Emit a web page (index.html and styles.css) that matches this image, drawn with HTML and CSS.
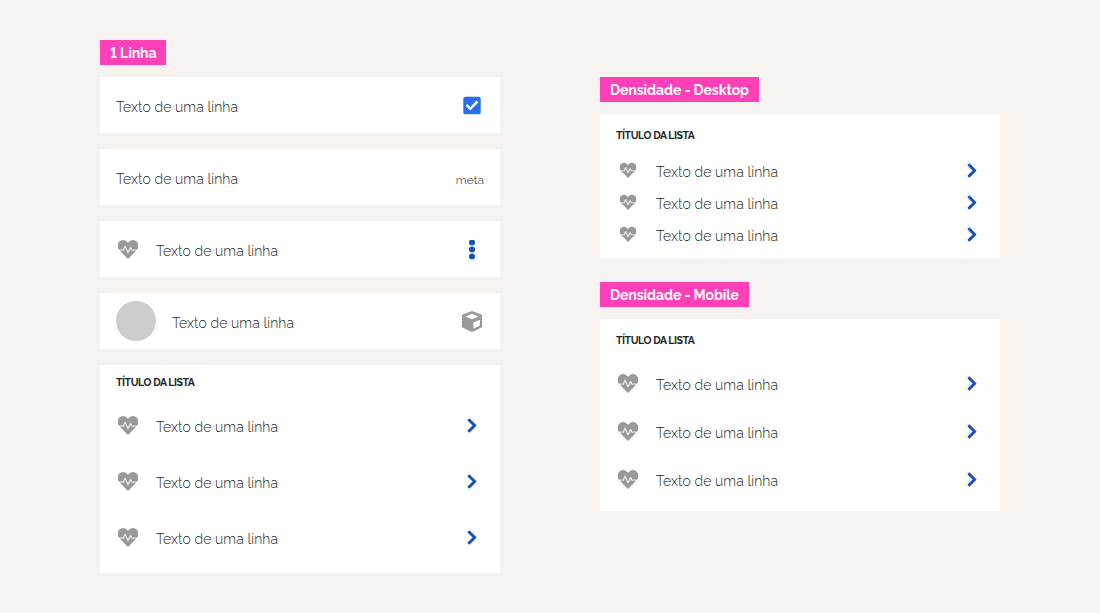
FILE: index.html
```html
<!DOCTYPE html>
<html lang="pt-BR">
<head>
<meta charset="utf-8">
<title>Lista</title>
<link rel="stylesheet" href="styles.css">
</head>
<body>
<svg class="symbols" aria-hidden="true">
  <symbol id="heart" viewBox="0 0 512 512"><path d="M320.2 243.8l-49.7 99.4c-6 12.1-23.4 11.7-28.9-.6l-56.9-126.3-30 71.7H60.6l182.5 186.5c7.1 7.3 18.6 7.3 25.7 0L451.4 288H342.3l-22.1-44.2zM473.7 73.9l-2.4-2.5c-51.5-52.6-135.8-52.6-187.4 0L256 100l-27.9-28.5c-51.5-52.7-135.9-52.7-187.4 0l-2.4 2.4C-10.4 123.7-12.5 203 31 256h102.4l35.9-86.2c5.4-12.9 23.6-13.2 29.4-.4l58.2 129.3 49-97.9c5.9-11.8 22.7-11.8 28.6 0l27.6 55.2H481c43.5-53 41.4-132.3-7.3-182.1z"/></symbol>
  <symbol id="chevron" viewBox="-96 0 512 512"><path d="M285.476 272.971L91.132 467.314c-9.373 9.373-24.569 9.373-33.941 0l-22.667-22.667c-9.357-9.357-9.375-24.522-.04-33.901L188.505 256 34.484 101.255c-9.335-9.379-9.317-24.544.04-33.901l22.667-22.667c9.373-9.373 24.569-9.373 33.941 0L285.475 239.03c9.373 9.372 9.373 24.568.001 33.941z"/></symbol>
  <symbol id="check" viewBox="0 0 20 20"><path fill-rule="evenodd" d="M3.2 1.2h13.6a1.9 1.9 0 0 1 1.9 1.9v13.8a1.9 1.9 0 0 1-1.9 1.9H3.2a1.9 1.9 0 0 1-1.9-1.9V3.1a1.9 1.9 0 0 1 1.9-1.9zM8.3 15 16.4 6.9 14.6 5.1 8.3 11.4 5.4 8.5 3.6 10.3z"/></symbol>
  <symbol id="dots" viewBox="0 0 20 20"><circle cx="10" cy="3" r="3"/><circle cx="10" cy="10" r="3"/><circle cx="10" cy="17" r="3"/></symbol>
  <symbol id="cube" viewBox="0 0 20 20"><path fill-rule="evenodd" d="M9.3.2 1 3.3Q0 3.7 0 4.8v9.6q0 1 .9 1.5l8.2 4q.9.4 1.8 0l8.2-4q.9-.5.9-1.5V4.8q0-1.1-1-1.5L10.7.2q-.7-.3-1.4 0zM10 2.7l6.3 2.5-6.3 2.7-6.3-2.7zM11.3 11l6.3-2.7v5.6l-6.3 3.1z"/></symbol>
</svg>
<main class="board">
  <section class="column">
    <h2 class="tag">1 Linha</h2>
    <div class="cards">
      <div class="card item"><span class="text">Texto de uma linha</span><svg class="icon check"><use href="#check"/></svg></div>
      <div class="card item"><span class="text">Texto de uma linha</span><span class="meta">meta</span></div>
      <div class="card item"><svg class="icon heart"><use href="#heart"/></svg><span class="text">Texto de uma linha</span><svg class="icon dots"><use href="#dots"/></svg></div>
      <div class="card item"><span class="avatar"></span><span class="text">Texto de uma linha</span><svg class="icon cube"><use href="#cube"/></svg></div>
      <div class="card list">
        <h3 class="title">TÍTULO DA LISTA</h3>
        <div class="item"><svg class="icon heart"><use href="#heart"/></svg><span class="text">Texto de uma linha</span><svg class="icon chevron"><use href="#chevron"/></svg></div>
        <div class="item"><svg class="icon heart"><use href="#heart"/></svg><span class="text">Texto de uma linha</span><svg class="icon chevron"><use href="#chevron"/></svg></div>
        <div class="item"><svg class="icon heart"><use href="#heart"/></svg><span class="text">Texto de uma linha</span><svg class="icon chevron"><use href="#chevron"/></svg></div>
      </div>
    </div>
  </section>
  <div class="column density">
    <section>
      <h2 class="tag desktop-tag">Densidade - Desktop</h2>
      <div class="card list desktop">
        <h3 class="title">TÍTULO DA LISTA</h3>
        <div class="item"><svg class="icon heart"><use href="#heart"/></svg><span class="text">Texto de uma linha</span><svg class="icon chevron"><use href="#chevron"/></svg></div>
        <div class="item"><svg class="icon heart"><use href="#heart"/></svg><span class="text">Texto de uma linha</span><svg class="icon chevron"><use href="#chevron"/></svg></div>
        <div class="item"><svg class="icon heart"><use href="#heart"/></svg><span class="text">Texto de uma linha</span><svg class="icon chevron"><use href="#chevron"/></svg></div>
      </div>
    </section>
    <section>
      <h2 class="tag mobile-tag">Densidade - Mobile</h2>
      <div class="card list mobile">
        <h3 class="title">TÍTULO DA LISTA</h3>
        <div class="item"><svg class="icon heart"><use href="#heart"/></svg><span class="text">Texto de uma linha</span><svg class="icon chevron"><use href="#chevron"/></svg></div>
        <div class="item"><svg class="icon heart"><use href="#heart"/></svg><span class="text">Texto de uma linha</span><svg class="icon chevron"><use href="#chevron"/></svg></div>
        <div class="item"><svg class="icon heart"><use href="#heart"/></svg><span class="text">Texto de uma linha</span><svg class="icon chevron"><use href="#chevron"/></svg></div>
      </div>
    </section>
  </div>
</main>
</body>
</html>
```
FILE: styles.css
```css
* { box-sizing: border-box; }
body {
  margin: 0;
  background: #f6f2ef;
  color: #222;
  font-family: Raleway, Lato, "Open Sans", sans-serif;
  font-variant-numeric: lining-nums;
}
.symbols { display: none; }
.board {
  display: flex;
  gap: 100px;
  height: 613px;
  padding: 40px 100px;
}
.column { width: 400px; }
.density {
  display: flex;
  flex-direction: column;
  gap: 24px;
  padding-top: 37px;
}
.tag {
  width: 66px;
  height: 25px;
  margin: 0 0 12px;
  padding: 1px 0 0 10px;
  background: #ff40b8;
  color: #fff;
  font-size: 14px;
  font-weight: 700;
  line-height: 25px;
  letter-spacing: -0.07px;
  white-space: nowrap;
}
.desktop-tag { width: 159px; }
.mobile-tag { width: 149px; }
.cards {
  display: flex;
  flex-direction: column;
  gap: 16px;
}
.card { background: #fff; }
.item {
  display: flex;
  align-items: center;
  gap: 16px;
  height: 56px;
  padding: 0 16px;
}
.text {
  flex: 1;
  padding-top: 4px;
  font-size: 14px;
  font-weight: 300;
  line-height: 20px;
  letter-spacing: 0.08px;
}
.meta {
  padding-top: 5px;
  font-size: 12px;
  font-weight: 300;
  line-height: 16px;
}
.icon {
  width: 24px;
  height: 24px;
  padding: 2.5px 2px 1.5px;
  fill: #999;
}
.icon.heart {
  padding: 2px 1.6px 1.2px;
  stroke: #999;
  stroke-width: 8px;
}
.icon.check { fill: #2670e8; }
.icon.dots { fill: #1351b4; }
.icon.chevron {
  padding: 4.5px 4px 3.5px;
  fill: #1351b4;
  stroke: #1351b4;
  stroke-width: 16px;
}
.icon.cube { padding: 2px 1.6px 1.2px; }
.avatar {
  width: 40px;
  height: 40px;
  border-radius: 50%;
  background: #ccc;
}
.list { padding: 8px 0; }
.title {
  height: 24px;
  margin: 0;
  padding: 2px 16px 0;
  font-size: 10.5px;
  font-weight: 700;
  line-height: 15px;
  letter-spacing: -0.45px;
}
.desktop .title,
.mobile .title { height: 32px; padding-top: 6px; }
.desktop .item { height: 32px; }
.desktop .icon.heart { padding: 3.8px 3.6px 3.4px; }
.mobile .item { height: 48px; }
```
